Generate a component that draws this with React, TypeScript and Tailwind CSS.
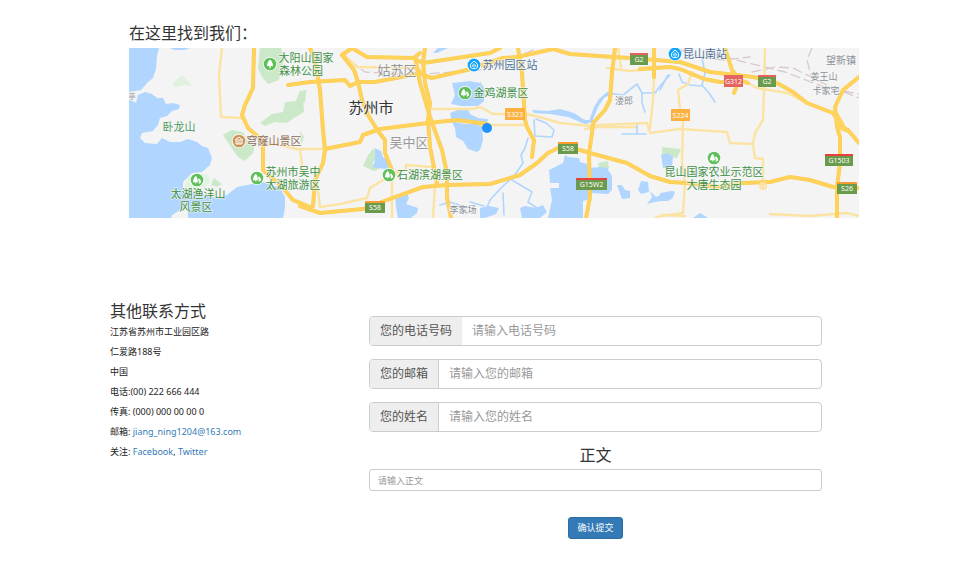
import React from "react";

const cjk = "font-['Noto_Sans','Noto_Sans_CJK_SC',sans-serif]";

const lakes = [
  "M129 48H159L157 56L156 69L153 78L147 83L141 90L129 92Z",
  "M129 99L136 103L138 95L145 92L152 94L157 98L163 98L166 104L173 103L180 105L179 109L172 111L167 116L160 118L158 125L153 131L142 133L140 138L145 143L157 144L162 138L170 142L180 142L188 139L197 142L202 146L208 148L212 158L210 165L202 172L192 173L183 182L183 188L192 192L217 198L227 195L237 187L247 185L263 182L273 185L280 188L285 197L285 208L283 218H188L188 206L183 208L171 216L172 218H129Z",
  "M433 53L438 48H448L437 53Z",
  "M170 48H190L185 50H174Z",
  "M452 83L470 81L480 83L485 90L484 101L478 106L462 106L451 104L455 95Z",
  "M450 113L460 109L468 109L470 114L478 118L488 119L487 123L472 121L452 123Z",
  "M452 122L466 124L482 124L483 140L480 150L477 152L468 149L463 141L456 137L455 128Z",
  "M375 148L381 151L383 157L387 160L389 170L380 168L373 168L375 160Z",
  "M395 195L407 193L409 198L406 204L418 208L417 213L411 218H398L396 207Z",
  "M565 155L568 157L579 158L580 162L587 164L588 168L601 167L607 168L612 176L612 190L608 194L590 193L590 199L583 201L583 218H548L552 200L550 188L559 188V183L550 183L549 170L563 163Z",
  "M520 208L525 206L536 208L543 205L547 212L540 218H522Z",
  "M617 185L622 185L625 190L630 191L630 198L622 199Z",
  "M641 181L648 182L649 192L641 194L638 190Z",
  "M647 204L652 197L650 191L656 197L670 191L675 192L672 199L655 202Z",
  "M661 155L668 153L673 157L672 167L663 168Z",
  "M660 193L674 191L673 197L668 201H660Z",
  "M480 208L489 206L499 208L496 214L485 218H480Z",
  "M693 218L700 213L708 218Z",
  "M577 120H590L588 124L580 122Z",
  "M532 110L548 111L560 109L574 113L583 119L589 121L594 107L599 99L607 92L611 94L604 98L598 107L592 122L585 124L568 117L550 114L534 113Z",
];

const parks = [
  "M260 48H281L284 60L279 80L268 84L262 77L258 68Z",
  "M307 90L303 98L304 112L294 118L287 123L275 122L265 126L260 123L272 114L283 112L285 102L296 101L300 91Z",
  "M223 135L232 130L243 132L247 140L255 144L253 153L245 161L238 157L233 150Z",
  "M363 166L368 155L374 148L377 158L372 163L382 168L374 171Z",
  "M598 163L608 161L609 169L599 168Z",
  "M662 147L681 149L677 158L662 155Z",
  "M300 92L306 92L305 102L299 105Z",
  "M480 81L484 87L483 94L480 93Z",
  "M300 131L304 137L301 145Z",
];

const streams = [
  "M528 138L525 148L521 155L523 163L514 176L501 188L490 200L485 212",
  "M512 180L522 186L532 192L528 202L537 208",
  "M503 193L504 215",
  "M534 120L535 136L552 137L554 130L546 123L536 119",
  "M607 93L623 95L637 84L642 93L655 93L660 86L670 75",
  "M642 93L642 103L645 112",
  "M702 58L705 73L702 85L709 93L715 102",
  "M679 74L682 82L690 85L702 86",
  "M668 75L660 90",
  "M622 134H646M637 123V133",
  "M440 205L450 202L462 206M470 202L484 206",
];

const minorRoads = [
  "M222 48L219 75L221 117L242 118",
  "M342 53L357 67L413 68",
  "M300 149H325",
  "M263 145L277 144L300 150L303 172",
  "M317 183L320 207L340 204L367 198L370 188L383 180L398 172",
  "M395 172L406 170L406 165L432 167M392 170L392 218",
  "M435 183L433 218",
  "M433 109H473L480 107L493 114L527 114L543 118L560 123L590 126L600 125L647 123L650 133L680 129L727 132L730 143L753 144L755 158L763 159V187",
  "M753 143L755 133L763 120L764 90L765 48",
  "M607 68L630 71L650 69",
  "M654 77L653 100L650 128",
  "M692 72L688 84L678 90L680 110L683 120L682 163L685 183L683 213L660 216",
  "M748 83L757 88L787 93L807 103",
  "M770 214L810 216L847 213L859 216",
  "M480 125H527",
  "M618 48L621 67",
  "M585 129L598 127H635",
  "M655 218L663 215L685 216",
];

const majorRoads = [
  "M254 48L253 88L245 105L242 115L248 128L262 140L263 150V170L283 188L293 200L310 207",
  "M300 206L320 213L363 209L387 200L423 187L447 185L490 184L520 175L537 163L548 153L558 148L580 150L590 153L627 163L650 176L670 182L687 183L720 187L743 183L770 182L790 177L810 180L833 187L859 188",
  "M288 85L310 82L345 80L350 86L358 82L375 82L417 74",
  "M414 66L423 75L432 78L467 70L503 58L517 57L553 49",
  "M358 82L354 70L342 55L352 48L367 57L413 58L423 63L450 59L490 53L500 48",
  "M310 48L315 60L320 90L323 130L325 150L323 163L315 180L313 206",
  "M358 82L362 100L368 115L378 131L385 140V153L392 170",
  "M325 149L360 142L363 135L380 129L428 123L457 120L480 123L487 124",
  "M425 48L423 62L425 83L430 103L428 120L430 147L437 183",
  "M420 53L415 57L420 83L430 117L442 150L447 173V197L451 218",
  "M518 48L522 73L525 120L527 127L534 140L532 157",
  "M550 48L570 54L613 57L630 58L680 62L710 72L753 77L777 83L793 92L807 103L833 113L842 127L848 130L859 143",
  "M640 69L670 67L680 69L704 79L720 82H740",
  "M725 48L732 70L740 80L748 83M737 85L734 93",
  "M615 48L612 73L610 100L605 110L593 123L592 133L589 153L590 197L586 218",
  "M654 48V77",
  "M859 77L843 90L835 107L837 127L840 137V163L837 187V218",
];

const rails = [
  "M350 61L365 72L410 75L480 70L520 56L537 48",
  "M752 72L775 67L793 68L827 85L859 98",
  "M710 53L740 61L785 72L827 88L859 94",
  "M812 48L807 60L811 76",
  "M675 48L700 57L723 60L750 57",
];

type Shield = { x: number; y: number; w: number; text: string; fill: string; top: string };
const green = "#6a9a4b";
const shields: Shield[] = [
  { x: 630, y: 53, w: 18, text: "G2", fill: green, top: "#e8605c" },
  { x: 758, y: 75, w: 18, text: "G2", fill: green, top: "#e8605c" },
  { x: 724, y: 75, w: 19, text: "G312", fill: "#e5645f", top: "#e5645f" },
  { x: 505, y: 108, w: 20, text: "S323", fill: "#fbb03f", top: "#fbb03f" },
  { x: 671, y: 109, w: 19, text: "S224", fill: "#fbb03f", top: "#fbb03f" },
  { x: 558, y: 142, w: 20, text: "S58", fill: green, top: "#f89c32" },
  { x: 576, y: 178, w: 31, text: "G15W2", fill: green, top: "#e8403c" },
  { x: 365, y: 201, w: 20, text: "S58", fill: green, top: "#f89c32" },
  { x: 825, y: 154, w: 28, text: "G1503", fill: green, top: "#e8403c" },
  { x: 837, y: 182, w: 20, text: "S26", fill: green, top: "#f89c32" },
];

type Label = { x: number; y: number; text: string; size: number; fill: string };
const park = "#3f9146";
const station = "#4f7299";
const town = "#8b9199";
const labels: Label[] = [
  { x: 306, y: 62, text: "大阳山国家", size: 11, fill: park },
  { x: 301, y: 75, text: "森林公园", size: 11, fill: park },
  { x: 397, y: 75, text: "姑苏区", size: 13, fill: "#999999" },
  { x: 371, y: 113, text: "苏州市", size: 15, fill: "#333333" },
  { x: 409, y: 147, text: "吴中区", size: 13, fill: "#999999" },
  { x: 510, y: 69, text: "苏州园区站", size: 11, fill: station },
  { x: 501, y: 97, text: "金鸡湖景区", size: 11, fill: park },
  { x: 705, y: 58, text: "昆山南站", size: 11, fill: station },
  { x: 841, y: 64, text: "望新镇", size: 10, fill: town },
  { x: 824, y: 80, text: "姜王山", size: 9, fill: town },
  { x: 826, y: 94, text: "卡家宅", size: 9, fill: town },
  { x: 624, y: 104, text: "溇郎", size: 9, fill: town },
  { x: 179, y: 131, text: "卧龙山", size: 11, fill: "#4c9a62" },
  { x: 274, y: 145, text: "穹窿山景区", size: 11, fill: "#8f6c57" },
  { x: 293, y: 176, text: "苏州市吴中", size: 11, fill: park },
  { x: 293, y: 189, text: "太湖旅游区", size: 11, fill: park },
  { x: 198, y: 198, text: "太湖渔洋山", size: 11, fill: park },
  { x: 196, y: 211, text: "风景区", size: 11, fill: park },
  { x: 430, y: 179, text: "石湖滨湖景区", size: 11, fill: park },
  { x: 463, y: 213, text: "李家场", size: 9, fill: town },
  { x: 714, y: 176, text: "昆山国家农业示范区", size: 11, fill: park },
  { x: 714, y: 189, text: "大唐生态园", size: 11, fill: park },
  { x: 132, y: 99, text: "亭", size: 7, fill: town },
];

function TreePin({ x, y, single = false }: { x: number; y: number; single?: boolean }) {
  return (
    <g transform={`translate(${x} ${y})`}>
      <circle r="7" fill="#fff" />
      <circle r="6.3" fill="#5fbf5a" />
      {single ? (
        <path d="M0 -4.5C2 -3 3 0 3 2H.6V4.3H-.6V2H-3C-3 0 -2 -3 0 -4.5Z" fill="#fff" />
      ) : (
        <path d="M-1.2 -4C.2 -3 1 0 .9 2.2H-.7V3.6H-1.6V2.2H-4C-4 0 -3 -3 -1.2 -4ZM2 -1.8C3.4 -.5 4.2 1 4.2 2.8H2.6V3.8H1.7V1.2L1 -.6Z" fill="#fff" />
      )}
    </g>
  );
}

function StationPin({ x, y }: { x: number; y: number }) {
  return (
    <g transform={`translate(${x} ${y})`}>
      <circle r="7" fill="#fff" />
      <circle r="6.4" fill="#12a5fb" />
      <path d="M0 -4L3.4 -.8V2.4L1.6 3.6H-1.6L-3.4 2.4V-.8Z" fill="none" stroke="#fff" />
      <path d="M-1.4 1.6V0L0 -1.2L1.4 0V1.6M0 0V3" fill="none" stroke="#fff" strokeWidth=".8" />
    </g>
  );
}

function SuzhouMap() {
  return (
    <svg viewBox="129 48 730 170" className="block w-full" role="img" aria-label="苏州市地图">
      <rect x="129" y="48" width="730" height="170" fill="#f4f4f4" />
      <path d="M172 84L182 75L192 86L185 85L176 87Z" fill="#e0f1df" />
      {parks.map((d) => <path key={d} d={d} fill="#cbe9c8" />)}
      {lakes.map((d) => <path key={d} d={d} fill="#b0d6ff" />)}
      <path d="M184 187L188 177L198 173L209 175L210 182L202 190L192 191Z" fill="#e3f3e3" />
      <path d="M211 185L214 178L222 184L217 187Z" fill="#cbe9c8" />
      <g fill="none" strokeLinejoin="round" strokeLinecap="round">
        {streams.map((d) => <path key={d} d={d} stroke="#b0d6ff" strokeWidth="1.6" />)}
        {rails.map((d) => <path key={d} d={d} stroke="#d9c9cb" strokeWidth="1.3" strokeDasharray="9 5" />)}
        {minorRoads.map((d) => <path key={d} d={d} stroke="#fbe3a4" strokeWidth="2.4" />)}
        {majorRoads.map((d) => <path key={d} d={d} stroke="#fbcb58" strokeWidth="4" />)}
        {majorRoads.map((d) => <path key={d} d={d} stroke="#ffd259" strokeWidth="3" />)}
        <path d="M837 113L838 128L848 132Z" fill="#ffd45e" stroke="#ffd45e" strokeWidth="2" />
        <circle cx="763" cy="186" r="3" stroke="#fbe3a4" strokeWidth="2" />
      </g>
      {shields.map((s) => (
        <g key={`${s.x}-${s.y}`}>
          <rect x={s.x} y={s.y} width={s.w} height="12" fill={s.fill} />
          <rect x={s.x} y={s.y} width={s.w} height="2" fill={s.top} />
          <text x={s.x + s.w / 2} y={s.y + 9} fontSize="7" fill="#fff" textAnchor="middle">{s.text}</text>
        </g>
      ))}
      <TreePin x={270} y={64} single />
      <TreePin x={465} y={93} />
      <TreePin x={197} y={180} />
      <TreePin x={257} y={178} />
      <TreePin x={389} y={175} />
      <TreePin x={714} y={158} />
      <StationPin x={474} y={65} />
      <StationPin x={675} y={54} />
      <g transform="translate(239 141)">
        <circle r="7" fill="#fff" />
        <circle r="6.3" fill="#cf9257" />
        <path d="M-4 -1L0 -3.8L4 -1ZM-3 0V3H3V0M-1 0V3M1 0V3" fill="none" stroke="#fff" />
      </g>
      {labels.map((l) => (
        <text key={`${l.x}-${l.y}`} x={l.x} y={l.y} fontSize={l.size} fill={l.fill} stroke="#f6f8f6" strokeWidth="1.6" strokeOpacity=".7" paintOrder="stroke" textAnchor="middle">
          {l.text}
        </text>
      ))}
      <circle cx="487" cy="128" r="5" fill="#1e90ff" />
    </svg>
  );
}

function Field({ id, label, placeholder, type, divided = true }: { id: string; label: string; placeholder: string; type: string; divided?: boolean }) {
  return (
    <div className="flex h-[30px] overflow-hidden rounded-[4px] border border-[#cccccc] text-[12px]">
      <label htmlFor={id} className={`flex shrink-0 items-center bg-[#eeeeee] px-2.5 text-[#555555] ${divided ? "border-r border-[#cccccc]" : ""}`}>
        {label}
      </label>
      <input id={id} type={type} placeholder={placeholder} className="min-w-0 flex-1 px-2.5 text-[#555555] outline-none placeholder:text-[#999999]" />
    </div>
  );
}

export default function App() {
  return (
    <main className={`min-h-screen bg-white text-[#333333] ${cjk}`}>
      <section className="pt-[22px] pr-[114px] pl-[129px]">
        <h2 className="mb-1 text-[16px] leading-[22px]">在这里找到我们：</h2>
        <SuzhouMap />
      </section>

      <div className="flex pt-[82px] pr-[151px] pb-8 pl-[110px]">
        <address className="w-[259px] shrink-0 text-[9px] leading-5 text-[#222222] not-italic">
          <h3 className="text-[16px] leading-[22px] text-[#333333]">其他联系方式</h3>
          <p>江苏省苏州市工业园区路</p>
          <p>仁爱路188号</p>
          <p>中国</p>
          <p>电话:(00) 222 666 444</p>
          <p>传真: (000) 000 00 00 0</p>
          <p>邮箱: <a href="mailto:jiang_ning1204@163.com" className="text-[#337ab7]">jiang_ning1204@163.com</a></p>
          <p>关注: <a href="#facebook" className="text-[#337ab7]">Facebook</a>, <a href="#twitter" className="text-[#337ab7]">Twitter</a></p>
        </address>

        <form className="flex min-w-0 flex-1 flex-col pt-4" onSubmit={(e) => e.preventDefault()}>
          <div className="flex flex-col gap-[13px]">
            <Field id="phone" type="tel" label="您的电话号码" placeholder="请输入电话号码" divided={false} />
            <Field id="email" type="email" label="您的邮箱" placeholder="请输入您的邮箱" />
            <Field id="name" type="text" label="您的姓名" placeholder="请输入您的姓名" />
          </div>
          <label htmlFor="body" className="mt-3 mb-[3px] text-center text-[16px] leading-[22px]">正文</label>
          <input id="body" type="text" placeholder="请输入正文" className="h-[22px] rounded-[3px] border border-[#cccccc] px-2 text-[9px] outline-none placeholder:text-[#999999]" />
          <button type="submit" className="mt-[26px] h-[22px] self-center rounded-[3px] border border-[#2e6da4] bg-[#337ab7] px-2 text-[9px] text-white">
            确认提交
          </button>
        </form>
      </div>
    </main>
  );
}
